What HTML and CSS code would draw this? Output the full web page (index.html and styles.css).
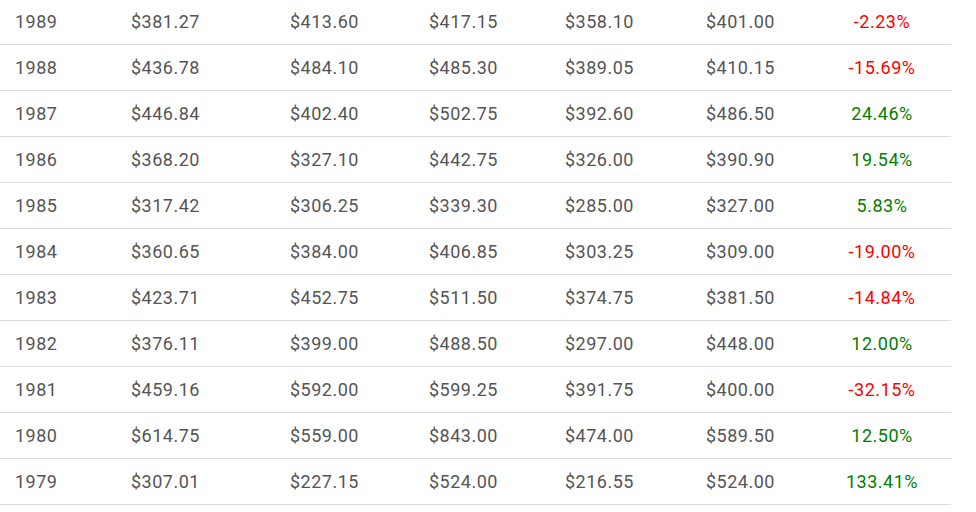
FILE: index.html
```html
<!DOCTYPE html>
<html>
<head>
<meta charset="utf-8">
<link rel="stylesheet" href="styles.css">
</head>
<body>
<table class="prices">
<colgroup>
<col class="c1"><col class="c2"><col class="c3"><col class="c4"><col class="c5"><col class="c6"><col class="c7">
</colgroup>
<tbody>
<tr><td>1989</td><td>$381.27</td><td>$413.60</td><td>$417.15</td><td>$358.10</td><td>$401.00</td><td class="chg neg">-2.23%</td></tr>
<tr><td>1988</td><td>$436.78</td><td>$484.10</td><td>$485.30</td><td>$389.05</td><td>$410.15</td><td class="chg neg">-15.69%</td></tr>
<tr><td>1987</td><td>$446.84</td><td>$402.40</td><td>$502.75</td><td>$392.60</td><td>$486.50</td><td class="chg pos">24.46%</td></tr>
<tr><td>1986</td><td>$368.20</td><td>$327.10</td><td>$442.75</td><td>$326.00</td><td>$390.90</td><td class="chg pos">19.54%</td></tr>
<tr><td>1985</td><td>$317.42</td><td>$306.25</td><td>$339.30</td><td>$285.00</td><td>$327.00</td><td class="chg pos">5.83%</td></tr>
<tr><td>1984</td><td>$360.65</td><td>$384.00</td><td>$406.85</td><td>$303.25</td><td>$309.00</td><td class="chg neg">-19.00%</td></tr>
<tr><td>1983</td><td>$423.71</td><td>$452.75</td><td>$511.50</td><td>$374.75</td><td>$381.50</td><td class="chg neg">-14.84%</td></tr>
<tr><td>1982</td><td>$376.11</td><td>$399.00</td><td>$488.50</td><td>$297.00</td><td>$448.00</td><td class="chg pos">12.00%</td></tr>
<tr><td>1981</td><td>$459.16</td><td>$592.00</td><td>$599.25</td><td>$391.75</td><td>$400.00</td><td class="chg neg">-32.15%</td></tr>
<tr><td>1980</td><td>$614.75</td><td>$559.00</td><td>$843.00</td><td>$474.00</td><td>$589.50</td><td class="chg pos">12.50%</td></tr>
<tr><td>1979</td><td>$307.01</td><td>$227.15</td><td>$524.00</td><td>$216.55</td><td>$524.00</td><td class="chg pos">133.41%</td></tr>
</tbody>
</table>
</body>
</html>
```
FILE: styles.css
```css
html, body {
  margin: 0;
  padding: 0;
  background: #ffffff;
}
.prices {
  margin-top: -1px;
  width: 951px;
  border-collapse: collapse;
  table-layout: fixed;
  font-family: Roboto, "Liberation Sans", sans-serif;
  font-size: 18px;
  letter-spacing: 0.5px;
  color: #555555;
}
.c1 { width: 116px; }
.c2 { width: 159px; }
.c3 { width: 139px; }
.c4 { width: 136px; }
.c5 { width: 141px; }
.c6 { width: 122px; }
.c7 { width: 138px; }
.prices td {
  height: 45px;
  padding: 0 0 0 15px;
  border-bottom: 1px solid #dddddd;
  vertical-align: middle;
  white-space: nowrap;
}
.prices td.chg {
  padding: 0;
  text-align: center;
}
.neg { color: #ff0000; }
.pos { color: #008000; }
```
